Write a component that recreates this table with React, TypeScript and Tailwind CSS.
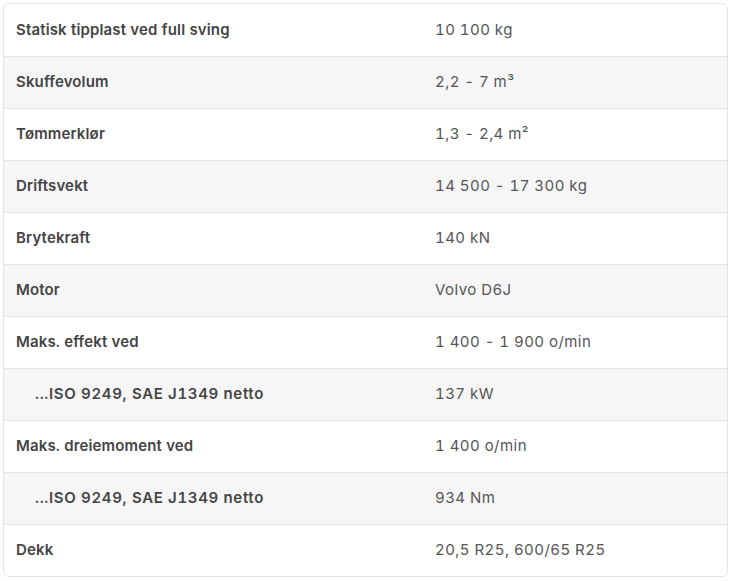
const specs: { label: string; value: string; sub?: boolean }[] = [
  { label: 'Statisk tipplast ved full sving', value: '10 100 kg' },
  { label: 'Skuffevolum', value: '2,2 - 7 m³' },
  { label: 'Tømmerklør', value: '1,3 - 2,4 m²' },
  { label: 'Driftsvekt', value: '14 500 - 17 300 kg' },
  { label: 'Brytekraft', value: '140 kN' },
  { label: 'Motor', value: 'Volvo D6J' },
  { label: 'Maks. effekt ved', value: '1 400 - 1 900 o/min' },
  { label: '...ISO 9249, SAE J1349 netto', value: '137 kW', sub: true },
  { label: 'Maks. dreiemoment ved', value: '1 400 o/min' },
  { label: '...ISO 9249, SAE J1349 netto', value: '934 Nm', sub: true },
  { label: 'Dekk', value: '20,5 R25, 600/65 R25' },
]

export default function App() {
  return (
    <div className="p-[3px] bg-white" style={{ fontFamily: 'Inter, "Noto Sans", sans-serif' }}>
      <div className="w-[725px] border border-[#e3e3e3] rounded-md overflow-hidden">
        {specs.map((row, i) => (
          <div
            key={i}
            className={`grid grid-cols-[419px_1fr] h-[52px] items-center tabular-nums ${
              i > 0 ? 'border-t border-[#e3e3e3]' : ''
            } ${i % 2 === 1 ? 'bg-[#f6f6f6]' : 'bg-white'}`}
          >
            <div
              className={`text-[15px] font-semibold text-[#444] ${
                row.sub ? 'pl-[31px] tracking-[0.65px]' : 'pl-3 tracking-[0.15px]'
              }`}
            >
              {row.label}
            </div>
            <div className="pl-3 text-[15px] tracking-[0.45px] text-[#555]">{row.value}</div>
          </div>
        ))}
      </div>
    </div>
  )
}
